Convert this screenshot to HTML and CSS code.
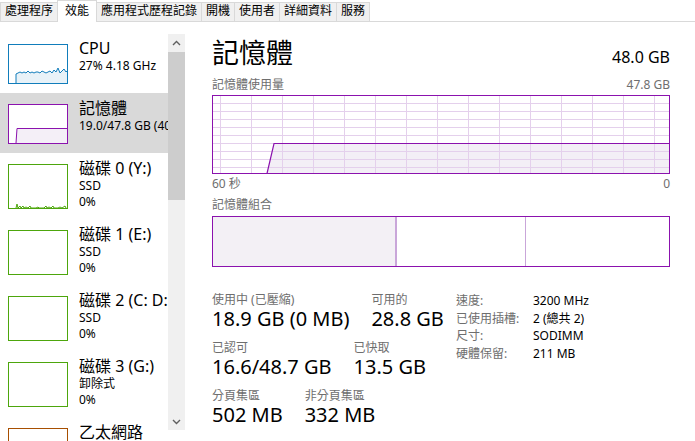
FILE: index.html
```html
<!DOCTYPE html>
<html lang="zh-Hant">
<head>
  <meta charset="UTF-8">
  <title>工作管理員 - 效能</title>
  <link rel="stylesheet" href="styles.css">
</head>
<body>

  <div class="tabs">
    <div class="tab">處理程序</div>
    <div class="tab active">效能</div>
    <div class="tab">應用程式歷程記錄</div>
    <div class="tab">開機</div>
    <div class="tab">使用者</div>
    <div class="tab">詳細資料</div>
    <div class="tab">服務</div>
  </div>

  <div class="page">
    <div class="side">
      <div class="side-list">
        <div class="item">
          <svg class="thumb" width="60" height="40" viewBox="0 0 60 40">
            <polygon fill="#e8f2f8" points="8,39 8,30 10,29 12,28 14,29 16,28 18,29 20,27 22,29 24,28 26,29 28,28 30,28 32,29 34,27 36,28 38,29 40,28 42,27 44,29 46,26 48,28 50,24 52,29 54,27 56,25 58,28 59,27 59,39"/>
            <polyline fill="none" stroke="#117dbb" points="8,39 8,30 10,29 12,28 14,29 16,28 18,29 20,27 22,29 24,28 26,29 28,28 30,28 32,29 34,27 36,28 38,29 40,28 42,27 44,29 46,26 48,28 50,24 52,29 54,27 56,25 58,28 59,27"/>
            <rect x="0.5" y="0.5" width="59" height="39" fill="none" stroke="#117dbb"/>
          </svg>
          <div class="item-text">
            <div class="item-title">CPU</div>
            <div class="item-sub">27% 4.18 GHz</div>
          </div>
        </div>
        <div class="item selected">
          <svg class="thumb" width="60" height="40" viewBox="0 0 60 40">
            <rect x="0.5" y="0.5" width="59" height="39" fill="#fff"/>
            <polygon fill="#f4eff7" points="8,39 9,24.5 59,24.5 59,39"/>
            <polyline fill="none" stroke="#8b12ae" points="8,39 9,24.5 59,24.5"/>
            <rect x="0.5" y="0.5" width="59" height="39" fill="none" stroke="#8b12ae"/>
          </svg>
          <div class="item-text">
            <div class="item-title">記憶體</div>
            <div class="item-sub">19.0/47.8 GB (40%)</div>
          </div>
        </div>
        <div class="item">
          <svg class="thumb" width="60" height="45" viewBox="0 0 60 45">
            <polyline fill="none" stroke="#4da60c" points="8,44 9,40 10,44 12,42 13,44 15,42 16,44 18,43 20,44 22,42 23,44 28,44 30,43 31,44 36,44 38,42 39,44 41,43 43,44 45,42 46,44 50,44 52,43 54,44 57,42 58,44"/>
            <rect x="0.5" y="0.5" width="59" height="44" fill="none" stroke="#4da60c"/>
          </svg>
          <div class="item-text">
            <div class="item-title">磁碟 0 (Y:)</div>
            <div class="item-sub">SSD</div>
            <div class="item-sub">0%</div>
          </div>
        </div>
        <div class="item">
          <svg class="thumb" width="60" height="45" viewBox="0 0 60 45">
            <rect x="0.5" y="0.5" width="59" height="44" fill="none" stroke="#4da60c"/>
          </svg>
          <div class="item-text">
            <div class="item-title">磁碟 1 (E:)</div>
            <div class="item-sub">SSD</div>
            <div class="item-sub">0%</div>
          </div>
        </div>
        <div class="item">
          <svg class="thumb" width="60" height="45" viewBox="0 0 60 45">
            <rect x="0.5" y="0.5" width="59" height="44" fill="none" stroke="#4da60c"/>
          </svg>
          <div class="item-text">
            <div class="item-title">磁碟 2 (C: D:)</div>
            <div class="item-sub">SSD</div>
            <div class="item-sub">0%</div>
          </div>
        </div>
        <div class="item">
          <svg class="thumb" width="60" height="45" viewBox="0 0 60 45">
            <rect x="0.5" y="0.5" width="59" height="44" fill="none" stroke="#4da60c"/>
          </svg>
          <div class="item-text">
            <div class="item-title">磁碟 3 (G:)</div>
            <div class="item-sub">卸除式</div>
            <div class="item-sub">0%</div>
          </div>
        </div>
        <div class="item">
          <svg class="thumb" width="60" height="45" viewBox="0 0 60 45">
            <rect x="0.5" y="0.5" width="59" height="44" fill="none" stroke="#a74f01"/>
          </svg>
          <div class="item-text">
            <div class="item-title">乙太網路</div>
            <div class="item-sub">乙太網路</div>
          </div>
        </div>
      </div>

      <div class="scrollbar">
        <div class="sb-btn">
          <svg width="9" height="6" viewBox="0 0 9 6"><polyline points="1,5 4.5,1.5 8,5" fill="none" stroke="#606060" stroke-width="1.4"/></svg>
        </div>
        <div class="sb-thumb"></div>
        <div class="sb-track"></div>
        <div class="sb-btn">
          <svg width="9" height="6" viewBox="0 0 9 6"><polyline points="1,1 4.5,4.5 8,1" fill="none" stroke="#606060" stroke-width="1.4"/></svg>
        </div>
      </div>
    </div>

    <div class="main">
      <div class="head">
        <div class="head-title">記憶體</div>
        <div class="head-total">48.0 GB</div>
      </div>

      <div class="caption caption-top">
        <span>記憶體使用量</span>
        <span>47.8 GB</span>
      </div>
      <svg class="graph" width="458" height="79" viewBox="0 0 458 79">
        <polygon fill="#f3eff6" points="55,78.5 62,48.5 457.5,48.5 457.5,78.5"/>
        <path fill="none" stroke="#e4d0ec" d="M8.5 0V79M39.5 0V79M70.5 0V79M101.5 0V79M132.5 0V79M163.5 0V79M194.5 0V79M225.5 0V79M256.5 0V79M287.5 0V79M318.5 0V79M349.5 0V79M380.5 0V79M411.5 0V79M442.5 0V79M0 8.5H458M0 16.5H458M0 24.5H458M0 32.5H458M0 40.5H458M0 48.5H458M0 56.5H458M0 64.5H458M0 72.5H458"/>
        <polyline fill="none" stroke="#8b12ae" stroke-width="1.2" points="55,78.5 62,48.5 458,48.5"/>
        <rect x="0.5" y="0.5" width="457" height="78" fill="none" stroke="#8b12ae"/>
      </svg>
      <div class="caption caption-axis">
        <span>60 秒</span>
        <span>0</span>
      </div>

      <div class="caption caption-combo">記憶體組合</div>
      <div class="combo">
        <div class="seg seg-used"></div>
        <div class="seg seg-modified"></div>
        <div class="seg seg-free"></div>
      </div>

      <div class="stats">
        <div class="stats-left">
          <div class="stat-row">
            <div class="stat">
              <div class="label">使用中 (已壓縮)</div>
              <div class="value">18.9 GB (0 MB)</div>
            </div>
            <div class="stat">
              <div class="label">可用的</div>
              <div class="value">28.8 GB</div>
            </div>
          </div>
          <div class="stat-row">
            <div class="stat">
              <div class="label">已認可</div>
              <div class="value">16.6/48.7 GB</div>
            </div>
            <div class="stat">
              <div class="label">已快取</div>
              <div class="value">13.5 GB</div>
            </div>
          </div>
          <div class="stat-row">
            <div class="stat">
              <div class="label">分頁集區</div>
              <div class="value">502 MB</div>
            </div>
            <div class="stat">
              <div class="label">非分頁集區</div>
              <div class="value">332 MB</div>
            </div>
          </div>
        </div>

        <div class="specs">
          <div class="label">速度:</div><div>3200 MHz</div>
          <div class="label">已使用插槽:</div><div>2 (總共 2)</div>
          <div class="label">尺寸:</div><div>SODIMM</div>
          <div class="label">硬體保留:</div><div>211 MB</div>
        </div>
      </div>
    </div>
  </div>

</body>
</html>
```

FILE: styles.css
```css
* {
  box-sizing: border-box;
}

body {
  margin: 0;
  width: 695px;
  height: 441px;
  overflow: hidden;
  background: #fff;
  color: #000;
  font-family: "Noto Sans", "Noto Sans CJK TC", sans-serif;
}

/* tabs */
.tabs {
  display: flex;
  align-items: flex-end;
  height: 22px;
  border-bottom: 1px solid #d9d9d9;
}

.tab {
  height: 19px;
  padding: 0 4px;
  margin-right: -1px;
  border: 1px solid #d9d9d9;
  border-bottom: 0;
  background: #f0f0f0;
  font-size: 12px;
  line-height: 16px;
  white-space: nowrap;
}

.tab.active {
  height: 22px;
  margin-bottom: -1px;
  padding: 2px 7px 0;
  background: #fff;
}

/* layout */
.page {
  display: flex;
  height: 419px;
}

.side {
  display: flex;
  width: 185px;
  flex-shrink: 0;
}

.side-list {
  width: 168px;
  padding-top: 11px;
  overflow: hidden;
}

.item {
  display: flex;
  padding: 11px 0 9px 8px;
  white-space: nowrap;
}

.item.selected {
  background: #d9d9d9;
}

.thumb {
  display: block;
  flex-shrink: 0;
}

.item-text {
  margin: -6px 0 0 11px;
}

.item-title {
  font-size: 16px;
  line-height: 20px;
}

.item-sub {
  font-size: 12px;
  line-height: 16px;
}

.scrollbar {
  display: flex;
  flex-direction: column;
  width: 17px;
  margin: 12px 0 11px;
  background: #f0f0f0;
}

.sb-btn {
  display: flex;
  align-items: center;
  justify-content: center;
  height: 17px;
}

.sb-btn svg {
  display: block;
}

.sb-thumb {
  height: 148px;
  margin-top: 1px;
  background: #cdcdcd;
}

.sb-track {
  flex: 1;
}

/* main panel */
.main {
  flex: 1;
  padding: 14px 25px 0 27px;
}

.head {
  display: flex;
  justify-content: space-between;
  align-items: baseline;
}

.head-title {
  font-size: 27px;
  line-height: 34px;
}

.head-total {
  font-size: 16px;
}

.caption {
  display: flex;
  justify-content: space-between;
  font-size: 12px;
  line-height: 16px;
  color: #6e6e6e;
}

.caption-top {
  margin-top: 7px;
}

.graph {
  display: block;
  margin-top: 2px;
}

.caption-axis {
  margin-top: 2px;
}

.caption-combo {
  margin-top: 5px;
}

.combo {
  display: flex;
  height: 51px;
  margin-top: 3px;
  border: 1px solid #8b12ae;
}

.seg-used {
  width: 184px;
  background: #f3f0f5;
  border-right: 2px solid #c9a6d9;
}

.seg-modified {
  width: 129px;
  border-right: 1px solid #c9a6d9;
}

.seg-free {
  flex: 1;
}

/* stats */
.stats {
  display: flex;
  margin-top: 25px;
}

.stats-left {
  width: 244px;
  flex-shrink: 0;
}

.stat-row {
  display: flex;
  gap: 22px;
  margin-bottom: 9px;
}

.label {
  color: #6e6e6e;
}

.stat .label {
  font-size: 12px;
  line-height: 15px;
}

.stat .value {
  font-size: 20px;
  line-height: 24px;
  white-space: nowrap;
}

.specs {
  display: grid;
  grid-template-columns: 77px auto;
  align-content: start;
  font-size: 12px;
  line-height: 17.7px;
}
```
